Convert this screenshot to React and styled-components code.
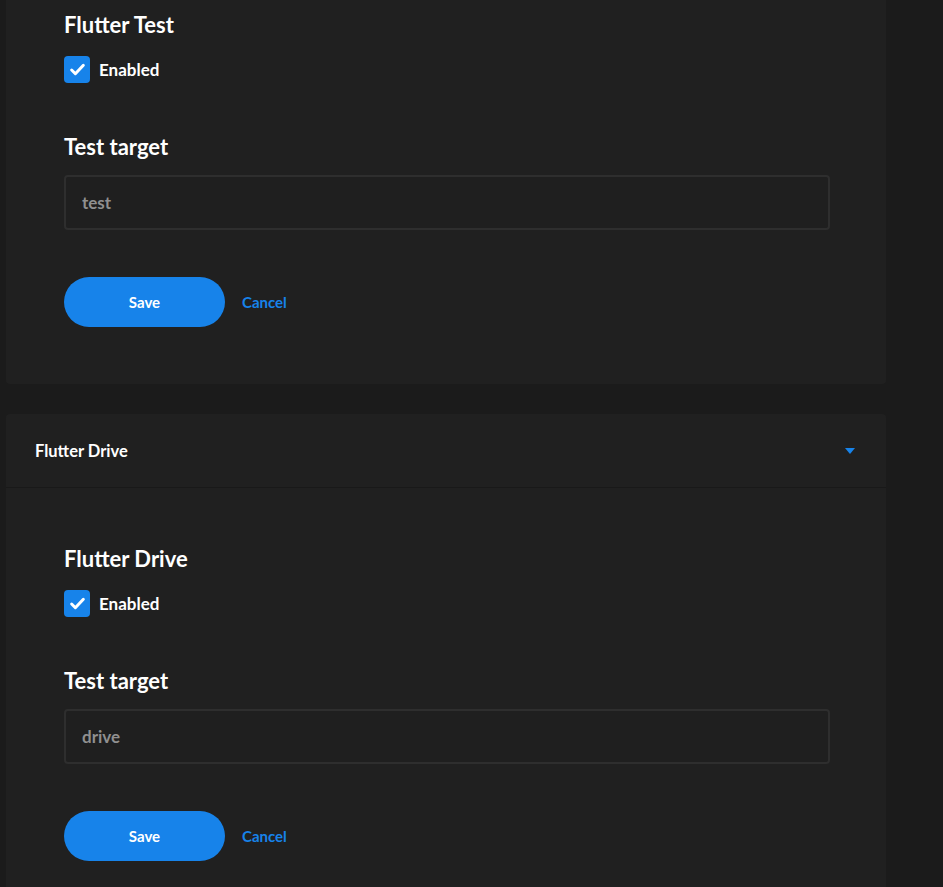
import React, { useState } from 'react'
import styled, { createGlobalStyle } from 'styled-components'

const GlobalStyle = createGlobalStyle`
    html, body {
        margin: 0;
        padding: 0;
        background: #1b1b1b;
        font-family: Lato, "Open Sans", Arial, sans-serif;
        overflow: hidden;
    }
`

// first step is scrolled so its header sits above the fold
const steps = [
    { name: 'Flutter Test', target: 'test', scrolled: true },
    { name: 'Flutter Drive', target: 'drive' },
]

const StepCard = ({ name, target, scrolled }) => {
    const [enabled, setEnabled] = useState(true)
    const [value, setValue] = useState(target)

    return (
        <Card scrolled={scrolled}>
            {!scrolled && (
                <CardHeader>
                    <HeaderTitle>{name}</HeaderTitle>
                    <Caret viewBox="0 0 10 6">
                        <path d="M0 0h10L5 6z" />
                    </Caret>
                </CardHeader>
            )}
            <CardBody scrolled={scrolled}>
                <SectionTitle>{name}</SectionTitle>
                <CheckRow onClick={() => setEnabled(!enabled)}>
                    <CheckBox checked={enabled}>
                        {enabled && (
                            <svg viewBox="0 0 16 16" width="17" height="17">
                                <path d="M2.5 8.5l3.5 3.5 7.5-8" fill="none" stroke="#fff" strokeWidth="2.8" strokeLinecap="round" strokeLinejoin="round" />
                            </svg>
                        )}
                    </CheckBox>
                    <span>Enabled</span>
                </CheckRow>

                <FieldTitle>Test target</FieldTitle>
                <Input value={value} onChange={e => setValue(e.target.value)} />

                <Actions>
                    <SaveButton>Save</SaveButton>
                    <CancelLink href="#">Cancel</CancelLink>
                </Actions>
            </CardBody>
        </Card>
    )
}

const App = () => {
    return (
        <>
            <GlobalStyle />
            <Page>
                <Column>
                    {steps.map(step => (
                        <StepCard key={step.name} {...step} />
                    ))}
                </Column>
            </Page>
        </>
    )
}

export default App

const Page = styled.div`
    height: 887px;
    overflow: hidden;
    padding-left: 6px;
`

const Column = styled.div`
    width: 880px;
    display: flex;
    flex-direction: column;
    gap: 30px;
`

const Card = styled.div`
    background: #202020;
    border-radius: ${props => props.scrolled ? '0 0 4px 4px' : '4px'};
`

const CardHeader = styled.div`
    height: 73px;
    display: flex;
    align-items: center;
    justify-content: space-between;
    padding: 0 31px 0 29px;
    border-bottom: 1px solid #191919;
`

const HeaderTitle = styled.div`
    color: #fff;
    font-size: 16.5px;
    font-weight: 700;
`

const Caret = styled.svg`
    width: 10px;
    height: 6px;
    fill: #1783ea;
`

const CardBody = styled.div`
    padding: ${props => props.scrolled ? '12px' : '58px'} 58px 57px;
`

const SectionTitle = styled.div`
    color: #fff;
    font-size: 22px;
    font-weight: 700;
    line-height: 26px;
`

const CheckRow = styled.label`
    display: flex;
    align-items: center;
    gap: 9px;
    margin-top: 18px;
    color: #fff;
    font-size: 17px;
    font-weight: 700;
    cursor: pointer;
`

const CheckBox = styled.span`
    width: 26px;
    height: 27px;
    border-radius: 4px;
    background: ${props => props.checked ? '#1783ea' : 'transparent'};
    border: ${props => props.checked ? 'none' : '2px solid #555'};
    display: flex;
    align-items: center;
    justify-content: center;
`

const FieldTitle = styled.div`
    color: #fff;
    font-size: 22px;
    font-weight: 700;
    line-height: 26px;
    margin-top: 51px;
`

const Input = styled.input`
    display: block;
    box-sizing: border-box;
    width: 766px;
    height: 55px;
    margin-top: 15px;
    padding: 0 16px;
    background: #1f1f1f;
    border: 2px solid #2e2e2e;
    border-radius: 4px;
    color: #909090;
    font-family: inherit;
    font-size: 17px;
    font-weight: 700;
    outline: none;
`

const Actions = styled.div`
    display: flex;
    align-items: center;
    gap: 17px;
    margin-top: 47px;
`

const SaveButton = styled.button`
    width: 161px;
    height: 50px;
    border: none;
    border-radius: 25px;
    background: #1783ea;
    color: #fff;
    font-family: inherit;
    font-size: 15px;
    font-weight: 700;
    cursor: pointer;
`

const CancelLink = styled.a`
    color: #1783ea;
    font-size: 15px;
    font-weight: 700;
    text-decoration: none;
`
